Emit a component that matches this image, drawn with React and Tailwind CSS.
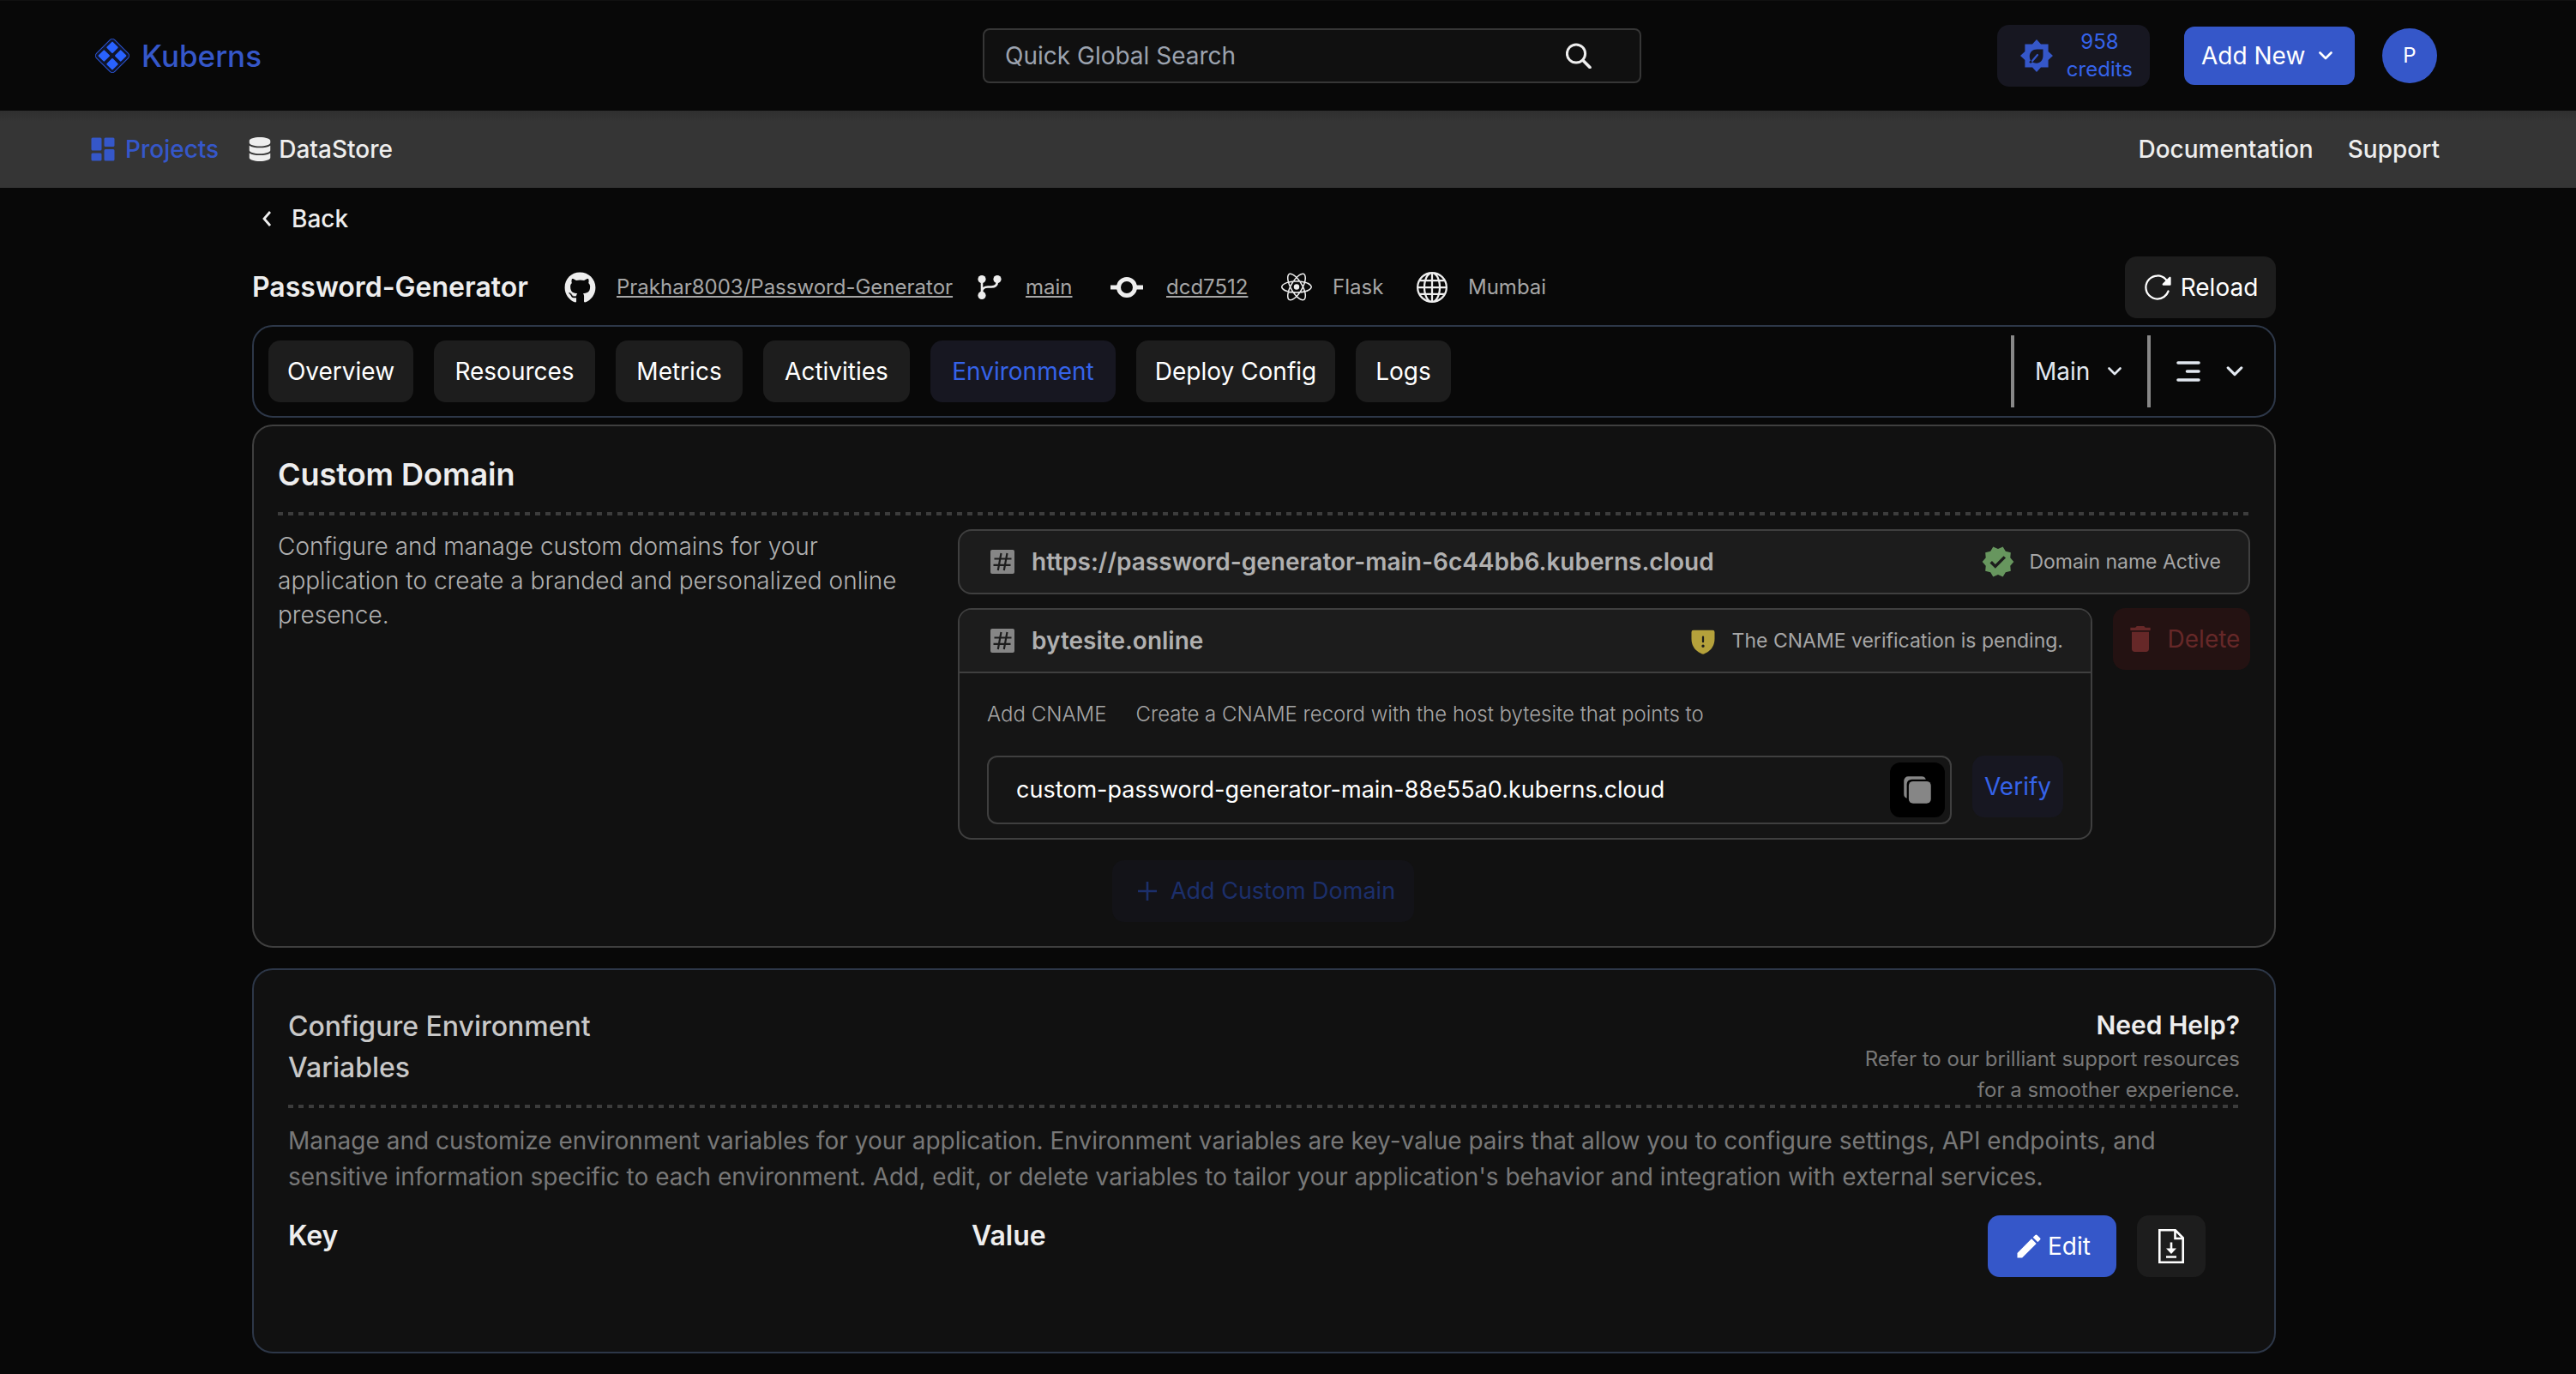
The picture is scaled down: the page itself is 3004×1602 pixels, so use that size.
import React, { useState } from 'react';
import { FaGithub, FaDatabase } from 'react-icons/fa';
import { GrReactjs } from 'react-icons/gr';
import { BsGlobe } from 'react-icons/bs';
import { BiSolidDashboard } from 'react-icons/bi';
import { MdVerified, MdDelete, MdEdit } from 'react-icons/md';
import { IoCopy, IoReload } from 'react-icons/io5';
import { PiShieldWarningFill } from 'react-icons/pi';

const tabs = [
  { name: 'Overview', width: 'w-[169px]' },
  { name: 'Resources', width: 'w-[188px]' },
  { name: 'Metrics', width: 'w-[148px]' },
  { name: 'Activities', width: 'w-[171px]' },
  { name: 'Environment', width: 'w-[216px]' },
  { name: 'Deploy Config', width: 'w-[232px]' },
  { name: 'Logs', width: 'w-[111px]' },
];

const Logo = () => (
  <svg viewBox="0 0 44 44" className="w-11 h-11" aria-hidden="true">
    <rect x="7" y="7" width="30" height="30" rx="4" transform="rotate(45 22 22)" fill="#10152a" stroke="#2b55d8" strokeWidth="1" />
    <g fill="#2962ff">
      <rect x="17" y="7.3" width="10" height="10" rx="1" transform="rotate(45 22 12.3)" />
      <rect x="17" y="26.7" width="10" height="10" rx="1" transform="rotate(45 22 31.7)" />
      <rect x="7.3" y="17" width="10" height="10" rx="1" transform="rotate(45 12.3 22)" />
      <rect x="26.7" y="17" width="10" height="10" rx="1" transform="rotate(45 31.7 22)" />
    </g>
  </svg>
);

const Chevron = ({ className }) => (
  <svg viewBox="0 0 16 10" className={className} fill="none" stroke="currentColor" strokeWidth="2.6" strokeLinecap="round" strokeLinejoin="round" aria-hidden="true">
    <path d="M1.5 1.5 8 8l6.5-6.5" />
  </svg>
);

const SearchIcon = () => (
  <svg viewBox="0 0 30 30" className="w-[30px] h-[30px]" fill="none" stroke="#eee" aria-hidden="true">
    <circle cx="12" cy="12.5" r="10.6" strokeWidth="3" />
    <path d="M19.8 20.3 28 28.6" strokeWidth="3.6" strokeLinecap="round" />
  </svg>
);

const CreditsIcon = () => (
  <svg viewBox="0 0 38 38" className="w-[38px] h-[38px] shrink-0" aria-hidden="true">
    <path fill="#3557c9" d="M19 0l5 5.4h8.6v8.6L38 19l-5.4 5v8.6H24L19 38l-5-5.4H5.4V24L0 19l5.4-5V5.4H14z" />
    <path fill="#171721" d="M26.5 11.5v7.5c0 5-3.2 8.7-7.6 8.7-2.2 0-3.7-.5-5-1.4l-1.8 1.8-1.9-1.8 1.9-1.9c-.9-1.4-1.3-2.9-1.3-4.7 0-4.8 3.5-8.2 8.7-8.2z" />
    <path d="M14 25l6-7" stroke="#3557c9" strokeWidth="2.2" strokeLinecap="round" />
  </svg>
);

const BranchIcon = () => (
  <svg viewBox="0 0 28 28" className="w-7 h-7" fill="none" stroke="#eee" aria-hidden="true">
    <path d="M5 5v18M23 6v1c0 5-3 6.5-7 6.5h-4c-4 0-7 2-7 6" strokeWidth="2.6" />
    <g fill="#eee" stroke="none">
      <circle cx="5" cy="4.6" r="4.6" />
      <circle cx="23" cy="4.6" r="4.6" />
      <circle cx="5" cy="23.4" r="4.6" />
    </g>
  </svg>
);

const CommitIcon = () => (
  <svg viewBox="0 0 40 26" className="w-10 h-[26px]" fill="none" stroke="#eee" strokeWidth="5" aria-hidden="true">
    <circle cx="20" cy="13" r="9.5" />
    <path d="M1 13h10M29 13h10" />
  </svg>
);

const HashIcon = () => (
  <svg viewBox="0 0 28 28" className="w-7 h-7 shrink-0" aria-hidden="true">
    <rect width="28" height="28" rx="2" fill="#868686" />
    <path d="M12.5 4 8.8 24M19.5 4l-3.7 20M4.5 10.5h20M3.5 17.8h20" stroke="#1c1c1c" strokeWidth="2.2" />
  </svg>
);

const FileDownloadIcon = () => (
  <svg viewBox="0 0 30 40" className="w-[30px] h-10" fill="none" stroke="#fff" strokeWidth="2.6" aria-hidden="true">
    <path d="M1.3 1.3h18.4l9 9v28.4H1.3z" />
    <path d="M19.5 1.5v9.5h9" />
    <path d="M15 15.5v8M9 32.5h12" />
    <path d="M9 22.5h12l-6 6.5z" fill="#fff" stroke="none" />
  </svg>
);

const MenuIcon = () => (
  <svg viewBox="0 0 28 26" className="w-7 h-[26px]" stroke="currentColor" strokeWidth="3.6" strokeLinecap="round" aria-hidden="true">
    <path d="M2 3h24M12.5 13H26M2 23h24" />
  </svg>
);

const Divider = () => (
  <div className="h-1 bg-[repeating-linear-gradient(90deg,#3c3c3c_0_6px,transparent_6px_12px)]"></div>
);

const Header = () => (
  <header className="h-[129px] pl-[109px] pr-[162px] flex items-center border-t border-[#111] bg-[#080808]">
    <a href="#home" className="flex items-center gap-3 text-[35px] font-medium text-[#3557c9]">
      <Logo />
      <span>Kuberns</span>
    </a>

    <form className="flex items-center w-[768px] h-16 ml-auto mr-[415px] pl-6 pr-14 rounded-lg border-2 border-[#363636] bg-[#101010]">
      <input
        type="text"
        aria-label="Quick Global Search"
        placeholder="Quick Global Search"
        className="flex-1 min-w-0 bg-transparent outline-none text-[28px] placeholder:text-[#9ca3af]"
      />
      <button type="button" aria-label="Search">
        <SearchIcon />
      </button>
    </form>

    <div className="flex items-center">
      <button className="w-[178px] h-[72px] pl-[27px] pr-5 flex items-center justify-between rounded-[14px] bg-[#171721] text-2xl leading-8 text-[#3563e9]">
        <CreditsIcon />
        <span className="text-center">958<br />credits</span>
      </button>
      <button className="w-[199px] h-[68px] ml-10 pl-5 pr-[26px] flex items-center justify-between rounded-xl bg-[#3557c9] text-[28px] text-white whitespace-nowrap">
        Add New
        <Chevron className="w-4 h-[10px] shrink-0" />
      </button>
      <button className="w-16 h-16 ml-8 rounded-full bg-[#3557c9] text-2xl text-white">P</button>
    </div>
  </header>
);

const NavBar = () => (
  <nav className="h-[90px] pl-[102px] pr-[159px] flex items-center justify-between bg-[linear-gradient(#2f2f2f,#353535_12px)] text-[28px] font-medium text-[#eee]">
    <div className="flex items-center gap-[34px]">
      <a href="#projects" className="flex items-center gap-2 text-[#3557c9]">
        <BiSolidDashboard className="w-9 h-9" />
        Projects
      </a>
      <a href="#datastore" className="flex items-center gap-2">
        <FaDatabase className="w-7 h-7" />
        DataStore
      </a>
    </div>
    <div className="flex items-center gap-10">
      <a href="#docs">Documentation</a>
      <a href="#support">Support</a>
    </div>
  </nav>
);

const ProjectInfo = () => (
  <div className="h-[72px] mt-2 flex items-center justify-between">
    <div className="flex items-center text-2xl text-[#a6a6a6]">
      <h1 className="w-[364px] text-[32px] font-semibold text-[#eee]">Password-Generator</h1>
      <FaGithub className="w-[37px] h-[37px] text-[#eee]" />
      <a href="#repo" className="w-[395px] ml-6 mr-[26px] underline">Prakhar8003/Password-Generator</a>
      <BranchIcon />
      <a href="#branch" className="w-[58px] ml-7 mr-10 underline">main</a>
      <CommitIcon />
      <a href="#commit" className="w-[94px] ml-[26px] mr-10 underline">dcd7512</a>
      <GrReactjs className="w-9 h-9 text-[#eee]" />
      <span className="w-[58px] ml-6 mr-10">Flask</span>
      <BsGlobe className="w-9 h-9 text-[#eee]" />
      <span className="ml-6">Mumbai</span>
    </div>
    <button className="w-[176px] h-[72px] flex items-center justify-center gap-2 rounded-[14px] bg-[#1d1d1d] text-[28px] text-white">
      <IoReload className="w-9 h-9" />
      Reload
    </button>
  </div>
);

const TabBar = () => {
  const [active, setActive] = useState('Environment');

  return (
    <div className="h-[108px] mt-2 pl-[17px] pr-9 flex items-center justify-between rounded-3xl border-2 border-[#2d3748] text-[28px]">
      <div className="flex gap-6">
        {tabs.map(tab => (
          <button
            key={tab.name}
            onClick={() => setActive(tab.name)}
            className={`${tab.width} h-[72px] rounded-[14px] whitespace-nowrap ${active === tab.name ? 'bg-[#171721] text-[#3563e9]' : 'bg-[#1d1d1d] text-white'}`}
          >
            {tab.name}
          </button>
        ))}
      </div>
      <div className="flex items-center text-[#e2e8f0]">
        <div className="w-1 h-[84px] bg-[#888]"></div>
        <button className="w-[155px] pl-6 pr-[30px] flex items-center justify-between">
          Main
          <Chevron className="w-4 h-[10px]" />
        </button>
        <div className="w-1 h-[84px] bg-[#888]"></div>
        <button aria-label="Menu" className="pl-[30px] flex items-center gap-[30px]">
          <MenuIcon />
          <Chevron className="w-5 h-3" />
        </button>
      </div>
    </div>
  );
};

const CustomDomain = () => (
  <section className="h-[610px] mt-2 pt-[22px] px-7 rounded-3xl border-2 border-[#3f3f3f] bg-[#111]">
    <h2 className="h-[78px] pt-[14px] text-4xl font-semibold text-[#eee]">Custom Domain</h2>
    <Divider />
    <div className="mt-4 flex items-start justify-between">
      <p className="w-[740px] text-[28px] leading-10 font-light text-[#b0b0b0]">
        Configure and manage custom domains for your application to create a branded and personalized online presence.
      </p>

      <div className="w-[1507px]">
        <div className="h-[76px] pl-9 pr-8 flex items-center justify-between rounded-2xl border-2 border-[#3f3f3f] bg-[#1c1c1c]">
          <div className="flex items-center gap-5">
            <HashIcon />
            <span className="text-[28px] font-semibold text-[#b0b0b0]">https://password-generator-main-6c44bb6.kuberns.cloud</span>
          </div>
          <div className="flex items-center gap-4 text-[23px] text-[#a6a6a6]">
            <MdVerified className="w-10 h-10 text-[#67965e]" />
            <span>Domain name Active</span>
          </div>
        </div>

        <div className="mt-4 flex items-start gap-6">
          <div className="flex-1 h-[270px] overflow-hidden rounded-2xl border-2 border-[#3f3f3f] bg-[#151515]">
            <div className="h-[74px] pl-9 pr-8 flex items-center justify-between border-b-2 border-[#3f3f3f] bg-[#1c1c1c]">
              <div className="flex items-center gap-5">
                <HashIcon />
                <span className="text-[28px] font-semibold text-[#b0b0b0]">bytesite.online</span>
              </div>
              <div className="flex items-center gap-4 text-[23px] text-[#a6a6a6]">
                <PiShieldWarningFill className="w-9 h-9 text-[#b5a13b]" />
                <span>The CNAME verification is pending.</span>
              </div>
            </div>
            <div className="px-8 pt-[30px]">
              <div className="flex gap-[34px] text-2xl leading-9 font-light text-[#a6a6a6]">
                <label htmlFor="cname">Add CNAME</label>
                <span>Create a CNAME record with the host bytesite that points to</span>
              </div>
              <div className="mt-[30px] flex items-start gap-6">
                <div className="flex-1 h-20 pl-8 pr-[6px] flex items-center rounded-xl border-2 border-[#3f3f3f]">
                  <input
                    id="cname"
                    type="text"
                    readOnly
                    defaultValue="custom-password-generator-main-88e55a0.kuberns.cloud"
                    className="flex-1 min-w-0 bg-transparent outline-none text-[27px] text-white"
                  />
                  <button aria-label="Copy" className="w-16 h-16 flex items-center justify-center rounded-xl bg-black text-[#868686]">
                    <IoCopy className="w-9 h-9" />
                  </button>
                </div>
                <button className="w-[106px] h-[72px] rounded-[14px] bg-[#171721] text-[28px] text-[#3563e9]">Verify</button>
              </div>
            </div>
          </div>
          <button className="w-[160px] h-[72px] flex items-center justify-center gap-3 rounded-[14px] bg-[#241212] text-[28px] text-[#662828]">
            <MdDelete className="w-10 h-10" />
            Delete
          </button>
        </div>

        <button className="w-[352px] h-[72px] mt-6 ml-[180px] pl-2 flex items-center justify-center gap-4 rounded-[14px] bg-[#131318] text-[27px] text-[#1c2f6b]">
          <svg viewBox="0 0 22 22" className="w-[22px] h-[22px]" stroke="currentColor" strokeWidth="2.6" aria-hidden="true">
            <path d="M11 0v22M0 11h22" />
          </svg>
          Add Custom Domain
        </button>
      </div>
    </div>
  </section>
);

const EnvironmentVariables = () => (
  <section className="h-[449px] mt-6 pt-[42px] px-10 rounded-3xl border-2 border-[#2d3748] bg-[#111]">
    <div className="h-[115px] flex items-start justify-between">
      <h2 className="w-[400px] text-[32px] leading-[48px] font-medium text-[#c8c8c8]">Configure Environment Variables</h2>
      <div className="w-[450px] text-right">
        <h3 className="text-[30px] leading-[44px] font-semibold text-[#eee]">Need Help?</h3>
        <p className="text-2xl leading-9 text-[#787878]">Refer to our brilliant support resources for a smoother experience.</p>
      </div>
    </div>
    <Divider />
    <p className="mt-[17px] text-[28px] leading-[42px] text-[#787878]">
      Manage and customize environment variables for your application. Environment variables are key-value pairs that allow you to configure settings, API endpoints, and sensitive information specific to each environment. Add, edit, or delete variables to tailor your application's behavior and integration with external services.
    </p>
    <div className="mt-6 pr-10 flex items-start justify-between">
      <div className="flex text-[32px] leading-[48px] font-semibold text-[#eee]">
        <span className="w-[797px]">Key</span>
        <span>Value</span>
      </div>
      <div className="flex gap-6">
        <button className="w-[150px] h-[72px] flex items-center justify-center gap-1 rounded-[14px] bg-[#3557c9] text-[28px] text-white">
          <MdEdit className="w-9 h-9" />
          Edit
        </button>
        <button aria-label="Download file" className="w-20 h-[72px] flex items-center justify-center rounded-[14px] bg-[#1d1d1d]">
          <FileDownloadIcon />
        </button>
      </div>
    </div>
  </section>
);

export default function App() {
  return (
    <div className="min-h-screen bg-[#080808] font-['Inter',sans-serif]">
      <Header />
      <NavBar />
      <main className="pl-[294px] pr-[350px] pb-6">
        <button className="h-[72px] pl-3 flex items-center gap-6 text-[28px] font-medium text-[#eee]">
          <svg viewBox="0 0 10 18" className="w-[10px] h-[18px]" fill="none" stroke="currentColor" strokeWidth="2.8" aria-hidden="true">
            <path d="M9 1 2 9l7 8" />
          </svg>
          Back
        </button>
        <ProjectInfo />
        <TabBar />
        <CustomDomain />
        <EnvironmentVariables />
      </main>
    </div>
  );
}
